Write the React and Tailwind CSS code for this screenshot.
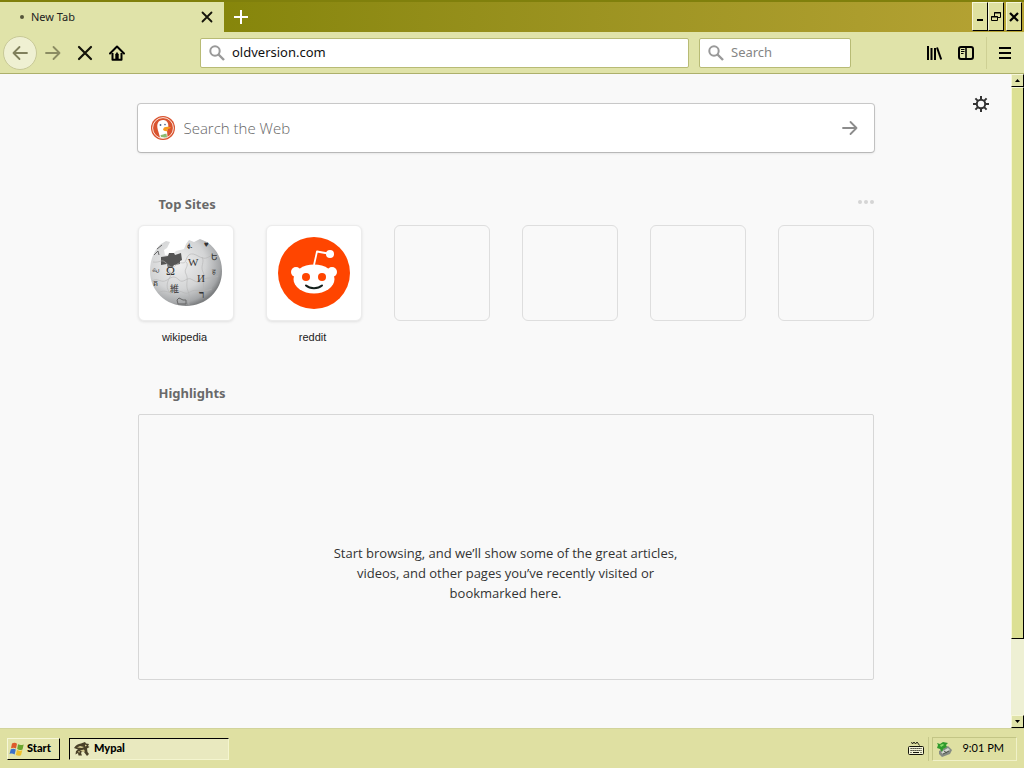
import { useState } from 'react';

const emptySites = [1, 2, 3, 4];

const raised = 'border border-t-[#f6f7d8] border-l-[#f6f7d8] border-r-black border-b-black';

function SearchIcon({ className }) {
  return (
    <svg viewBox="0 0 16 16" className={className} fill="none" stroke="#999" strokeWidth="2">
      <circle cx="6" cy="6" r="4.7" />
      <path d="M9.5 9.5 15 15" strokeWidth="2.4" />
    </svg>
  );
}

function ArrowIcon({ className, flip }) {
  return (
    <svg viewBox="0 0 16 16" className={className} fill="none" stroke="currentColor" strokeWidth="1.8" strokeLinecap="round" strokeLinejoin="round">
      {flip ? <path d="M15 8H1.5M7.5 2 1.5 8l6 6" /> : <path d="M1 8h13.5M8.5 2l6 6-6 6" />}
    </svg>
  );
}

function CrossIcon({ className, width }) {
  return (
    <svg viewBox="0 0 16 16" className={className} stroke="#14140a" strokeWidth={width} strokeLinecap="round">
      <path d="M2 2l12 12M14 2 2 14" />
    </svg>
  );
}

function HomeIcon() {
  return (
    <svg viewBox="0 0 16 16" className="size-4">
      <path d="M1 8.500 8 1.500l7 7" fill="none" stroke="#000" strokeWidth="2" strokeLinecap="round" strokeLinejoin="round" />
      <path d="M3.500 8v6.800h9V8" fill="none" stroke="#000" strokeWidth="2" strokeLinejoin="round" />
      <path d="M6.300 14.500V9.300Q8 6.800 9.700 9.300v5.200z" fill="#000" />
      <path d="M7.200 7.500h1.600v1H7.200z" fill="#000" />
    </svg>
  );
}

function LibraryIcon() {
  return (
    <svg viewBox="0 0 16 16" className="size-4" fill="none" stroke="#000" strokeWidth="2">
      <path d="M2 1v14M5.500 3v12M9 3v12" />
      <path d="M11 2.500 15.200 14.500" />
    </svg>
  );
}

function SidebarIcon() {
  return (
    <svg viewBox="0 0 16 16" className="size-4" fill="none" stroke="#000">
      <rect x="1" y="2" width="14" height="12" rx="2" strokeWidth="2" />
      <path d="M8 2v12" strokeWidth="1.600" />
      <path d="M3 4.500h3.500M3 6.500h3.500M3 8.500h2.500" strokeWidth="1" />
    </svg>
  );
}

function GearIcon() {
  return (
    <svg viewBox="0 0 16 16" className="size-4" fill="none" stroke="#333">
      <circle cx="8" cy="8" r="4.200" strokeWidth="2" />
      <path d="M8 0v4M8 12v4M0 8h4M12 8h4M2.400 2.400l2.700 2.700M10.900 10.900l2.700 2.700M2.400 13.600l2.700-2.700M10.900 5.100l2.700-2.700" strokeWidth="2" />
    </svg>
  );
}

function DuckIcon() {
  return (
    <svg viewBox="0 0 24 24" className="size-6 shrink-0">
      <circle cx="12" cy="12" r="12" fill="#d9532f" />
      <circle cx="12" cy="12" r="10.400" fill="none" stroke="#fbe5dc" strokeWidth="1" />
      <path d="M9 21.500C8 17 5.500 12 6.500 8c.8-3 3.500-4.500 6.500-4 3.500.8 4.500 3.500 4.300 6.500l-1.300 4 .5 6.500a10 10 0 0 1-7.500.5z" fill="#fff" />
      <path d="M13 11.500c2-1.200 5-1 7-.3-.5 1.500-3 1.500-4.500 2 1.500.6 2 1 1 1.800-2 .7-4-.3-4.500-1.500z" fill="#f79a1e" />
      <path d="M9.500 19c2 .2 3-1.500 6-1.200l.5 3.500c-2 .2-4 .2-6-.3z" fill="#8cba72" />
      <circle cx="9.500" cy="9" r=".9" fill="#48628c" />
      <circle cx="14" cy="8.600" r=".8" fill="#48628c" />
    </svg>
  );
}

function WikipediaLogo() {
  return (
    <svg viewBox="0 0 74 70" className="h-[70px] w-[74px]" fontFamily="Liberation Serif, serif" fill="#333">
      <defs>
        <radialGradient id="globe" cx="38%" cy="36%" r="66%">
          <stop offset="0" stopColor="#f1f1f1" />
          <stop offset=".6" stopColor="#d3d4d5" />
          <stop offset=".9" stopColor="#a4a6a8" />
          <stop offset="1" stopColor="#7d7f81" />
        </radialGradient>
      </defs>
      <path d="M12 6l5-3 4 1-3 6-3 2 1 5 8-1 3-3 8-2 2-5 3-4 5 2 6-3 7 3a36 36 0 0 1 15 29C73 53 57 68 37 68S1 53 1 33C1 22 5 12 12 6z" fill="url(#globe)" />
      <path d="M12 19l7-1 1-3h5l1 2 6-2 1 7-2 1v3l-6 1-2 3h-4l-1-4-6 1z" fill="#555" />
      <g fill="none" stroke="#b4b4b4" strokeWidth=".6">
        <path d="M4 24c7 1 8-3 12 0s6 8 11 3 8 1 10-5 5-8 12-4 9 2 14-1" />
        <path d="M3 43c6-4 9 3 15-1s8-4 12 0 8-3 12-1 7 5 12 1 8 0 15-4" />
        <path d="M9 55c7-5 12 2 18-1s8 4 14 0 12 1 22-3" />
        <path d="M20 28c-2 5 4 6 1 11s-5 11 1 17M37 24c4 4-3 7 0 12s-1 10 2 17 0 9 1 14M53 19c3 5-2 9 1 15s-1 9 1 18" />
      </g>
      <text x="17" y="37" fontSize="12">Ω</text>
      <text x="39" y="28" fontSize="11">W</text>
      <text x="48" y="44" fontSize="11">И</text>
      <text x="21" y="54" fontSize="9" fontFamily="Noto Sans CJK JP, sans-serif">維</text>
      <text x="50" y="60" fontSize="11" fontWeight="bold">ר</text>
      <text x="62" y="22" fontSize="9">Ե</text>
      <text x="3" y="34" fontSize="8">வ</text>
      <text x="55" y="9" fontSize="8">♥</text>
      <text x="38" y="11" fontSize="8">ፉ</text>
      <text x="4" y="48" fontSize="8">គ</text>
      <text x="63" y="36" fontSize="7">ह</text>
      <path d="M28 62l2-2 4 2h3v4h-8zM5 17l4-4 1 4M8 11l5-4" fill="none" stroke="#666" />
    </svg>
  );
}

function RedditLogo() {
  return (
    <svg viewBox="0 0 72 72" className="size-[72px]">
      <circle cx="36" cy="36" r="36" fill="#ff4500" />
      <path d="M36 28l3-13.500 11 2" fill="none" stroke="#fff" strokeWidth="1.800" strokeLinejoin="round" />
      <circle cx="52" cy="17" r="4" fill="#fff" />
      <circle cx="18" cy="35" r="5" fill="#fff" />
      <circle cx="54" cy="35" r="5" fill="#fff" />
      <ellipse cx="36" cy="42" rx="20.500" ry="14.500" fill="#fff" />
      <circle cx="28" cy="40" r="4" fill="#ff4500" />
      <circle cx="44" cy="40" r="4" fill="#ff4500" />
      <path d="M28 48.500c4 3.500 12 3.500 16 0" fill="none" stroke="#14201c" strokeWidth="2" strokeLinecap="round" />
    </svg>
  );
}

function WindowsFlag() {
  return (
    <svg viewBox="0 0 16 16" className="size-4">
      <path d="M3 2.500c2-1 3.500-.8 5 .2L7 7.500c-1.500-1-3-1.200-5-.3z" fill="#dd5a2b" />
      <path d="M9 3.200c2 1 3.500 1 5.700.2l-1.200 5c-2 .8-3.500.8-5.300-.3z" fill="#6ba52e" />
      <path d="M1.800 8.200c2-.9 3.500-.7 5 .3l-1.200 5C4 12.500 2.500 12.200.5 13z" fill="#3b70c9" />
      <path d="M8 9.100c1.800 1 3.300 1 5.300.2l-1.300 5c-2 .8-3.400.7-5.200-.3z" fill="#efc02c" />
    </svg>
  );
}

function MypalIcon() {
  return (
    <svg viewBox="0 0 16 16" className="size-4">
      <path d="M0 7c2-3 4-4 7-4.500l4-1.500 1 1.500 3 .5-1 2 1.500 1-2.500 1.500.5 3.500 1.500 2-2 2-3-4-2-.5-1 1.500 1 2.500H4.500L4 12l-2.500 1.500L2 10l2-1.500z" fill="#4a4129" />
      <path d="M3 6.500l3-1.500 4 1-2 1zM6 9.500l4-1 1 2-2 .5zM11 3.500l2 1-2 1zM4 10l2 .5-1 1.500z" fill="#d8cd92" />
    </svg>
  );
}

function KeyboardIcon() {
  return (
    <svg viewBox="0 0 16 16" className="size-4" fill="none" stroke="#14140a">
      <path d="M3.500 1l1 2 1.500-2 1.500 2L9 1l1.500 2 1 1.500" strokeWidth=".9" />
      <rect x=".5" y="5.500" width="15" height="8" rx="1" fill="#f4f4d8" />
      <path d="M2.500 7.500h11M2.500 9.500h11" strokeDasharray="1.200 .8" strokeWidth="1.200" />
      <path d="M2.500 11.500h1M5 11.500h6M12.500 11.500h1" strokeWidth="1.200" />
    </svg>
  );
}

function SafelyRemoveIcon() {
  return (
    <svg viewBox="0 0 16 16" className="size-4">
      <path d="M3 10l9-5 4 4-2 4-8 3-3-3z" fill="#858b84" />
      <path d="M5 11l7-4 2 2-7 4z" fill="#d3d8cf" />
      <path d="M7 13l6-3M8 10l3 2" stroke="#4d534c" />
      <path d="M1 2l3 1 3-2 5 1-2 2 1 2-4 2-1 3-2-3-3-1 1-3z" fill="#309b2c" />
      <path d="M4 4l3-1 1 1-3 2z" fill="#8bdd6a" />
    </svg>
  );
}

export default function App() {
  const [url, setUrl] = useState('oldversion.com');
  const [query, setQuery] = useState('');
  const [webQuery, setWebQuery] = useState('');

  return (
    <div className="flex min-h-screen flex-col bg-[#f9f9f9] font-['Noto_Sans','Open_Sans',sans-serif] text-[#222]">
      {/* Tab strip */}
      <header className="flex h-8 items-stretch border-t-2 border-[#80800c] bg-linear-to-r from-[#858509] from-20% to-[#b6a334]">
        <div className="flex w-56 items-center bg-[#e0e3a9] pr-[7px] pl-5">
          <span className="size-1 rounded-full bg-[#55553a]" />
          <span className="ml-[7px] flex-1 text-[11px]">New Tab</span>
          <button type="button" aria-label="Close tab" className="flex size-5 items-center justify-center">
            <CrossIcon className="size-3" width="2.4" />
          </button>
        </div>
        <button type="button" aria-label="Open a new tab" className="flex w-[34px] items-center justify-center">
          <svg viewBox="0 0 16 16" className="size-4" stroke="#fff" strokeWidth="2">
            <path d="M8 1v14M1 8h14" />
          </svg>
        </button>
        <div className="ml-auto flex h-[29px] pr-0.5">
          <button type="button" aria-label="Minimize" className={`${raised} flex w-4 items-center justify-center bg-[#dfe1a0]`}>
            <svg viewBox="0 0 12 12" className="size-3">
              <path d="M3 8h6v2H3z" />
            </svg>
          </button>
          <button type="button" aria-label="Restore" className={`${raised} flex w-4 items-center justify-center bg-[#dfe1a0]`}>
            <svg viewBox="0 0 12 12" className="size-3" fill="none" stroke="#000">
              <path d="M4.500 5V1.500h6v5H8M4 2h7" />
              <path d="M1.500 5.500h6v4h-6zM1 6h7" />
            </svg>
          </button>
          <button type="button" aria-label="Close" className={`${raised} ml-0.5 flex w-4 items-center justify-center bg-[#dfe1a0]`}>
            <svg viewBox="0 0 12 12" className="size-3" stroke="#000" strokeWidth="2.200">
              <path d="M2 2l8 8M10 2l-8 8" />
            </svg>
          </button>
        </div>
      </header>

      {/* Navigation bar */}
      <nav className="flex h-[42px] items-center border-b border-[#adb06b] bg-[#e0e3a9] pl-[3px]">
        <button type="button" aria-label="Back" className="flex size-[34px] items-center justify-center rounded-full border border-[#c8c997] bg-[#eff0d2] text-[#80805c]">
          <ArrowIcon flip className="size-4" />
        </button>
        <button type="button" aria-label="Forward" className="flex size-8 items-center justify-center text-[#8b8c62]">
          <ArrowIcon className="size-4" />
        </button>
        <button type="button" aria-label="Stop" className="flex size-8 items-center justify-center">
          <CrossIcon className="size-4" width="2.2" />
        </button>
        <button type="button" aria-label="Home" className="flex size-8 items-center justify-center">
          <HomeIcon />
        </button>
        <label className="ml-[67px] flex h-[30px] min-w-0 flex-1 items-center rounded-xs border border-[#b8bb75] bg-white px-2">
          <SearchIcon className="size-4 shrink-0" />
          <input
            type="text"
            aria-label="Address"
            value={url}
            onChange={e => setUrl(e.target.value)}
            className="ml-[7px] min-w-0 flex-1 pt-px text-[13px] text-[#111] outline-none"
          />
        </label>
        <label className="ml-2.5 flex h-[30px] w-[152px] items-center rounded-xs border border-[#b8bb75] bg-white px-2">
          <SearchIcon className="size-4 shrink-0" />
          <input
            type="text"
            aria-label="Search"
            placeholder="Search"
            value={query}
            onChange={e => setQuery(e.target.value)}
            className="ml-[7px] min-w-0 flex-1 pt-px text-[13px] outline-none placeholder:text-[#858585]"
          />
        </label>
        <button type="button" aria-label="Library" className="ml-[67px] flex size-8 items-center justify-center">
          <LibraryIcon />
        </button>
        <button type="button" aria-label="Sidebars" className="flex size-8 items-center justify-center">
          <SidebarIcon />
        </button>
        <button type="button" aria-label="Menu" className="ml-1 flex h-8 w-[38px] items-center justify-center border-l border-[#ced094] pr-0.5">
          <svg viewBox="0 0 16 16" className="size-4" stroke="#000" strokeWidth="2">
            <path d="M2 3h12M2 8h12M2 13h12" />
          </svg>
        </button>
      </nav>

      <div className="flex flex-1">
        {/* New tab page */}
        <div className="relative min-w-0 flex-1 px-8">
          <button type="button" aria-label="Customize your New Tab page" className="absolute top-[22px] right-[22px]">
            <GearIcon />
          </button>

          <main className="mx-auto max-w-[736px] pt-[30px] pb-12">
            <form onSubmit={e => e.preventDefault()} className="flex h-12 items-center rounded-[3px] bg-white pr-4 pl-[13px] shadow-[0_0_0_1px_rgba(0,0,0,0.18),0_1px_3px_rgba(0,0,0,0.15)]">
              <DuckIcon />
              <input
                type="text"
                aria-label="Search the Web"
                placeholder="Search the Web"
                value={webQuery}
                onChange={e => setWebQuery(e.target.value)}
                className="ml-[9px] min-w-0 flex-1 font-['Open_Sans','Noto_Sans',sans-serif] text-[15px] font-light outline-none placeholder:text-[#666]"
              />
              <button type="submit" aria-label="Submit search" className="text-[#8c8c8c]">
                <ArrowIcon className="size-4" />
              </button>
            </form>

            <section className="mt-[42px]">
              <div className="flex h-5 items-start justify-between">
                <h2 className="pl-[21px] text-[13px] leading-5 font-bold text-[#696969]">Top Sites</h2>
                <button type="button" aria-label="Section options" className="flex gap-0.5 py-1.5">
                  <span className="size-1 rounded-full bg-[#d5d5d5]" />
                  <span className="size-1 rounded-full bg-[#d5d5d5]" />
                  <span className="size-1 rounded-full bg-[#d5d5d5]" />
                </button>
              </div>
              <ul className="mt-[11px] flex flex-wrap gap-8 font-['Liberation_Sans',Arial,sans-serif] text-[11px]">
                <li className="w-24">
                  <a href="#wikipedia" className="block text-center">
                    <span className="flex h-24 items-center justify-center rounded-md border border-[#ececec] bg-white shadow-[0_1px_3px_rgba(0,0,0,0.1)]">
                      <WikipediaLogo />
                    </span>
                    <span className="mt-2 block pr-0.5 leading-4">wikipedia</span>
                  </a>
                </li>
                <li className="w-24">
                  <a href="#reddit" className="block text-center">
                    <span className="flex h-24 items-center justify-center rounded-md border border-[#ececec] bg-white shadow-[0_1px_3px_rgba(0,0,0,0.1)]">
                      <RedditLogo />
                    </span>
                    <span className="mt-2 block pr-0.5 leading-4">reddit</span>
                  </a>
                </li>
                {emptySites.map(n => (
                  <li key={n} className="h-24 w-24 rounded-md border border-[#dedede]" />
                ))}
              </ul>
            </section>

            <section className="mt-[38px]">
              <h2 className="pl-[21px] text-[13px] leading-5 font-bold text-[#696969]">Highlights</h2>
              <div className="mt-[11px] flex h-[266px] justify-center rounded-xs border border-[#d7d7d7] pt-32">
                <p className="w-[350px] text-center font-['Open_Sans','Noto_Sans',sans-serif] text-[13px] leading-5 text-[#333]">
                  Start browsing, and we’ll show some of the great articles, videos, and other pages you’ve recently visited or bookmarked here.
                </p>
              </div>
            </section>
          </main>
        </div>

        {/* Scrollbar */}
        <div className="flex w-[13px] flex-col bg-[#eef0d4]">
          <button type="button" aria-label="Scroll up" className={`${raised} flex h-[13px] items-center justify-center bg-[#e0e3a9]`}>
            <svg viewBox="0 0 5 3" className="h-[3px] w-[5px]">
              <path d="M0 3 2.500 0 5 3z" />
            </svg>
          </button>
          <div className={`${raised} h-[552px] bg-[#dce094]`} />
          <button type="button" aria-label="Scroll down" className={`${raised} mt-auto flex h-[13px] items-center justify-center bg-[#e0e3a9]`}>
            <svg viewBox="0 0 5 3" className="h-[3px] w-[5px]">
              <path d="M0 0h5L2.500 3z" />
            </svg>
          </button>
        </div>
      </div>

      {/* Taskbar */}
      <footer className="flex h-10 items-center border-t border-[#d2d49c] bg-[#dfe0a2] px-[7px] font-['Lato','Open_Sans',sans-serif] text-[11px] text-black">
        <button type="button" className={`${raised} flex h-[22px] w-[53px] items-center gap-0.5 bg-[#e3e4ac] pl-px font-black`}>
          <WindowsFlag />
          Start
        </button>
        <button type="button" className="ml-[9px] flex h-[22px] w-40 items-center gap-1 border border-t-black border-r-[#f4f5cf] border-b-[#f4f5cf] border-l-black bg-[#e9e9bf] pl-1 font-black">
          <MypalIcon />
          Mypal
        </button>
        <div className="ml-auto flex items-center">
          <KeyboardIcon />
          <div className="ml-1 h-6 w-px bg-[#c6c88b]" />
          <div className="ml-[3px] flex h-6 w-[85px] items-center justify-between border border-t-[#c3c585] border-r-[#f0f1c8] border-b-[#f0f1c8] border-l-[#c3c585] pr-3 pl-[3px]">
            <SafelyRemoveIcon />
            <time>9:01 PM</time>
          </div>
        </div>
      </footer>
    </div>
  );
}
